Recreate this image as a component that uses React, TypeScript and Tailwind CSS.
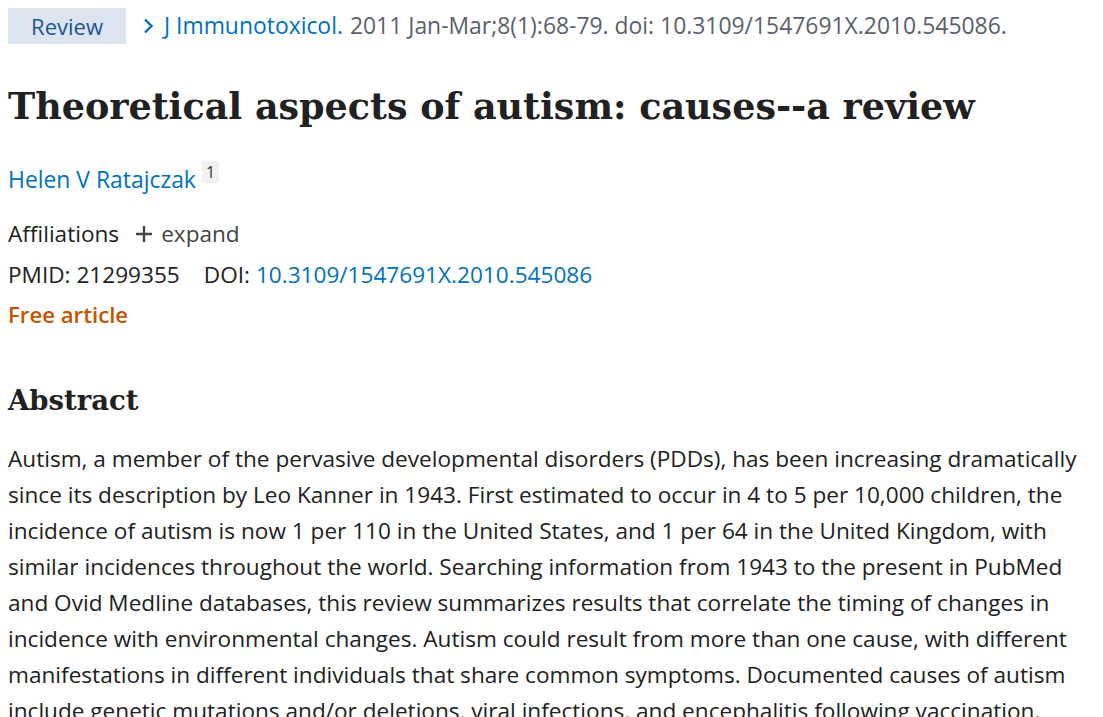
import React from "react";

const sans = { fontFamily: '"Open Sans", "Noto Sans", sans-serif' };

export default function App() {
  return (
    <div className="bg-white w-[1103px] h-[717px] overflow-hidden text-[#212121]" style={sans}>
      <div className="pl-2 pt-2 pr-[8px]">
        <div className="flex items-center h-9">
          <span className="bg-[#dce4ef] text-[#205493] text-[22px] h-9 w-[118px] flex items-center justify-center">Review</span>
          <span className="ml-[16px] flex items-center text-[22.9px]">
            <svg width="14" height="18" viewBox="0 0 14 18" className="mr-[8px]">
              <path d="M3 2.5 L9.5 9 L3 15.5" fill="none" stroke="#0071bc" strokeWidth="2.4" />
            </svg>
            <span className="text-[#0071bc]">J Immunotoxicol.</span>
            <span className="text-[#5b616b] ml-[7px]">2011 Jan-Mar;8(1):68-79. doi: 10.3109/1547691X.2010.545086.</span>
          </span>
        </div>
        <h1 className="mt-[39px] text-[36.5px] leading-[48px] font-bold text-[#212121]" style={{ fontFamily: '"DejaVu Serif", serif' }}>
          Theoretical aspects of autism: causes--a review
        </h1>
        <div className="mt-[33px] text-[22.9px] leading-[32px] flex items-start">
          <span className="text-[#0071bc]">Helen V Ratajczak</span>
          <span className="ml-[6px] mt-[-3px] bg-[#f1f1f1] text-[#333] text-[16px] leading-[22px] px-[4px] rounded-[2px]">1</span>
        </div>
        <div className="mt-[22px] text-[22.6px] leading-[32px] flex items-center">
          <span>Affiliations</span>
          <span className="ml-[15px] flex items-center text-[#444]">
            <svg width="20" height="20" viewBox="0 0 20 20" className="mr-[7px]">
              <path d="M10 2 V18 M2 10 H18" stroke="#444" strokeWidth="2.4" />
            </svg>
            expand
          </span>
        </div>
        <div className="mt-[9px] text-[22.6px] leading-[32px]">
          <span>PMID: 21299355</span>
          <span className="ml-[24px]">DOI: </span>
          <span className="text-[#0071bc]">10.3109/1547691X.2010.545086</span>
        </div>
        <div className="mt-[8px] text-[22.2px] leading-[32px] font-semibold text-[#c05600]">Free article</div>
        <h2 className="mt-[49px] text-[27.5px] leading-[40px] font-bold" style={{ fontFamily: '"DejaVu Serif", serif' }}>Abstract</h2>
        <p className="mt-[21px] text-[22.6px] leading-[36px] whitespace-nowrap">
          Autism, a member of the pervasive developmental disorders (PDDs), has been increasing dramatically<br />
          since its description by Leo Kanner in 1943. First estimated to occur in 4 to 5 per 10,000 children, the<br />
          incidence of autism is now 1 per 110 in the United States, and 1 per 64 in the United Kingdom, with<br />
          similar incidences throughout the world. Searching information from 1943 to the present in PubMed<br />
          and Ovid Medline databases, this review summarizes results that correlate the timing of changes in<br />
          incidence with environmental changes. Autism could result from more than one cause, with different<br />
          manifestations in different individuals that share common symptoms. Documented causes of autism<br />
          include genetic mutations and/or deletions, viral infections, and encephalitis following vaccination.
        </p>
      </div>
    </div>
  );
}
